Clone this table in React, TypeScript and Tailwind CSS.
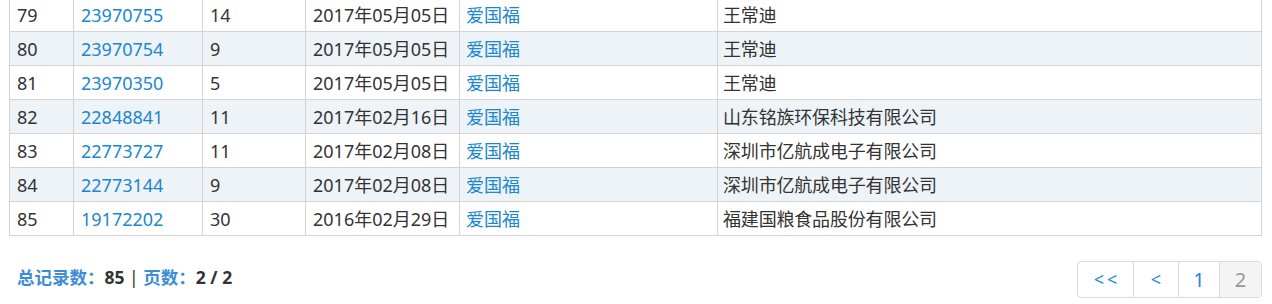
import React from 'react'

// 商标记录表格（第 2 页）
const rows = [
  { no: 79, reg: '23970755', cls: '14', date: '2017年05月05日', name: '爱国福', owner: '王常迪' },
  { no: 80, reg: '23970754', cls: '9', date: '2017年05月05日', name: '爱国福', owner: '王常迪' },
  { no: 81, reg: '23970350', cls: '5', date: '2017年05月05日', name: '爱国福', owner: '王常迪' },
  { no: 82, reg: '22848841', cls: '11', date: '2017年02月16日', name: '爱国福', owner: '山东铭族环保科技有限公司' },
  { no: 83, reg: '22773727', cls: '11', date: '2017年02月08日', name: '爱国福', owner: '深圳市亿航成电子有限公司' },
  { no: 84, reg: '22773144', cls: '9', date: '2017年02月08日', name: '爱国福', owner: '深圳市亿航成电子有限公司' },
  { no: 85, reg: '19172202', cls: '30', date: '2016年02月29日', name: '爱国福', owner: '福建国粮食品股份有限公司' }
]

const font = { fontFamily: '"Noto Sans", "Noto Sans CJK SC", sans-serif' }

export default function App() {
  return (
    <div className="w-[1272px] h-[304px] overflow-hidden bg-white text-[18px] text-[#333]" style={font}>
      <div className="px-[9px] -mt-[3px]">
        <table className="w-[1253px] table-fixed border-collapse border border-[#d4d4d4]">
          <colgroup>
            <col className="w-[64px]" />
            <col className="w-[129px]" />
            <col className="w-[103px]" />
            <col className="w-[154px]" />
            <col className="w-[258px]" />
            <col />
          </colgroup>
          <tbody>
            {rows.map((r, i) => (
              <tr key={r.no} className={i % 2 === 1 ? 'bg-[#eef3f8]' : 'bg-white'}>
                <td className="h-[34px] border border-[#d4d4d4] px-[7px] py-0 leading-[24px]">{r.no}</td>
                <td className="border border-[#d4d4d4] px-[7px] py-0 leading-[24px] text-[#1a87cf]">{r.reg}</td>
                <td className="border border-[#d4d4d4] px-[7px] py-0 leading-[24px]">{r.cls}</td>
                <td className="border border-[#d4d4d4] px-[7px] py-0 leading-[24px]">{r.date}</td>
                <td className="border border-[#d4d4d4] px-[6px] py-0 leading-[24px] text-[#1a87cf]">{r.name}</td>
                <td className="border border-[#d4d4d4] px-[5px] py-0 leading-[24px] tracking-[-0.01em]">{r.owner}</td>
              </tr>
            ))}
          </tbody>
        </table>
      </div>

      {/* 底部统计与分页 */}
      <div className="flex items-center justify-between pl-[17px] pr-[10px] mt-[25px]">
        <div className="font-bold text-[17.5px] -mt-[4px]">
          <span className="text-[#3c8dd5]">总记录数：</span>
          <span className="text-[#333]">85</span>
          <span className="text-[#333] font-normal"> | </span>
          <span className="text-[#3c8dd5]">页数：</span>
          <span className="text-[#333]">2 / 2</span>
        </div>
        <div className="flex h-[37px] rounded border border-[#dcdcdc] overflow-hidden text-[20px]">
          <span className="w-[56px] flex items-center justify-center text-[#1a8ad4] text-[18px] tracking-[3px] pl-[3px] border-r border-[#dcdcdc]">&lt;&lt;</span>
          <span className="w-[45px] flex items-center justify-center text-[#1a8ad4] text-[18px] border-r border-[#dcdcdc]">&lt;</span>
          <span className="w-[41px] flex items-center justify-center text-[#1a8ad4] border-r border-[#dcdcdc]">1</span>
          <span className="w-[41px] flex items-center justify-center text-[#999] bg-[#f4f4f4]">2</span>
        </div>
      </div>
    </div>
  )
}
